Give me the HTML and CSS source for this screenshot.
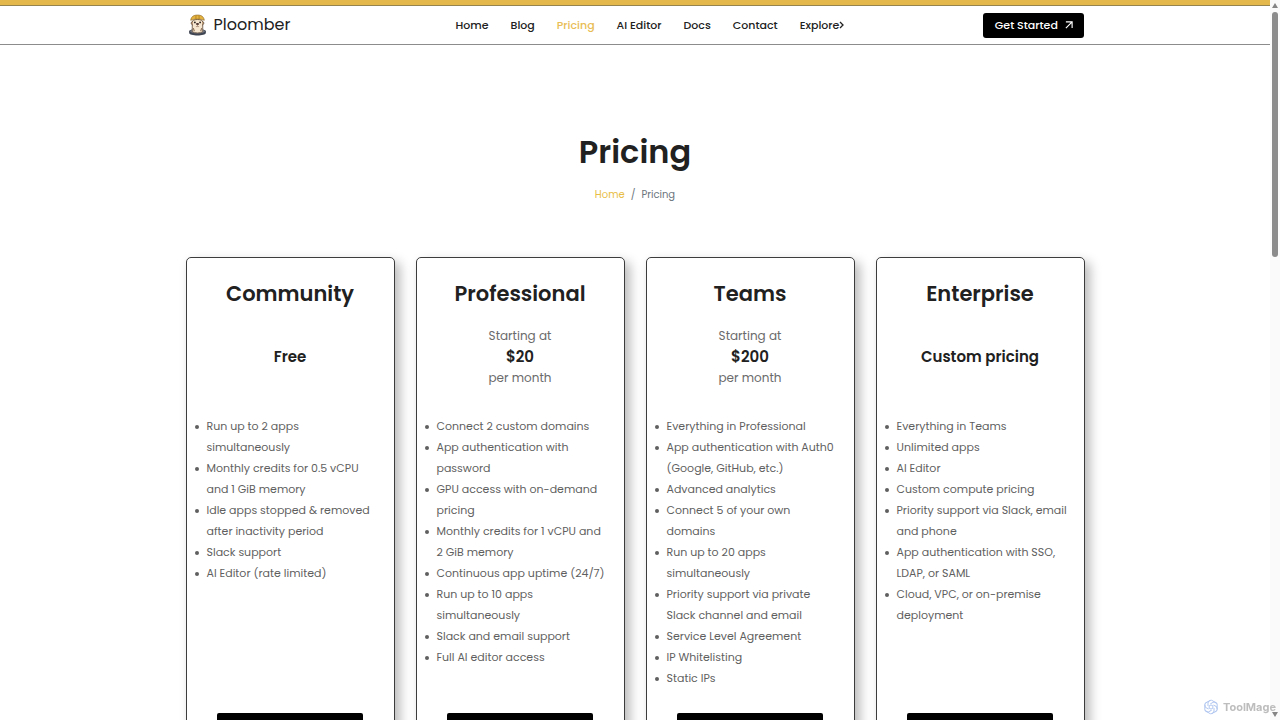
FILE: index.html
```html
<!DOCTYPE html>
<html lang="en">
<head>
<meta charset="UTF-8">
<meta name="viewport" content="width=device-width, initial-scale=1.0">
<title>Pricing | Ploomber</title>
<link rel="stylesheet" href="styles.css">
</head>
<body>

<header class="site-header">
  <div class="container header-inner">
    <a class="brand" href="#">
      <svg class="brand-logo" viewBox="0 0 36 42" aria-hidden="true">
        <path d="M2 33c0-6 32-6 32 0v3c0 7-32 7-32 0z" fill="#3f4552"/>
        <ellipse cx="18" cy="33" rx="14" ry="4" fill="#7b808c"/>
        <path d="M8 34V15c0-6 20-6 20 0v19c-4 3-16 3-20 0z" fill="#f6e6cf" stroke="#5a4636" stroke-width="1.5"/>
        <path d="M9 14c-4 1-4 6 0 7M27 14c4 1 4 6 0 7" fill="#caa27c" stroke="#5a4636" stroke-width="1.5"/>
        <path d="M5 12C6 4 12 2 18 2s12 2 13 10c-7-3-19-3-26 0z" fill="#e5b440" stroke="#8a6524" stroke-width="1.2"/>
        <path d="M15 3v7M21 3v7" stroke="#a87b22" stroke-width="1.5"/>
        <circle cx="13" cy="16" r="1.8" fill="#2b2422"/>
        <circle cx="23" cy="16" r="1.8" fill="#2b2422"/>
        <ellipse cx="18" cy="19" rx="3" ry="2" fill="#4a302c"/>
        <path d="M18 20v3M15 24h6" stroke="#7a5848" stroke-width="1"/>
        <path d="M10 27l2 6M26 27l-2 6" stroke="#8a6a50" stroke-width="2"/>
      </svg>
      <span>Ploomber</span>
    </a>
    <nav class="main-nav">
      <a href="#">Home</a>
      <a href="#">Blog</a>
      <a class="active" href="#">Pricing</a>
      <a href="#">AI Editor</a>
      <a href="#">Docs</a>
      <a href="#">Contact</a>
      <a class="explore" href="#">Explore
        <svg class="chevron" viewBox="0 0 5 8" aria-hidden="true"><path d="M1 1l3 3-3 3"/></svg>
      </a>
    </nav>
    <a class="get-started" href="#">Get Started
      <svg class="arrow" viewBox="0 0 9 9" aria-hidden="true"><path d="M1 8l7-7M1 1h7v7"/></svg>
    </a>
  </div>
</header>

<main class="container">
  <section class="page-title">
    <h1>Pricing</h1>
    <div class="breadcrumb"><a href="#">Home</a><span>/</span><span>Pricing</span></div>
  </section>

  <section class="plans">
    <article class="plan">
      <h2>Community</h2>
      <div class="price"><strong>Free</strong></div>
      <ul>
        <li>Run up to 2 apps<br>simultaneously</li>
        <li>Monthly credits for 0.5 vCPU<br>and 1 GiB memory</li>
        <li>Idle apps stopped &amp; removed<br>after inactivity period</li>
        <li>Slack support</li>
        <li>AI Editor (rate limited)</li>
      </ul>
      <button type="button" class="plan-button" aria-label="Choose Community"></button>
    </article>

    <article class="plan">
      <h2>Professional</h2>
      <div class="price">
        <span>Starting at</span>
        <strong>$20</strong>
        <span>per month</span>
      </div>
      <ul>
        <li>Connect 2 custom domains</li>
        <li>App authentication with<br>password</li>
        <li>GPU access with on-demand<br>pricing</li>
        <li>Monthly credits for 1 vCPU and<br>2 GiB memory</li>
        <li>Continuous app uptime (24/7)</li>
        <li>Run up to 10 apps<br>simultaneously</li>
        <li>Slack and email support</li>
        <li>Full AI editor access</li>
      </ul>
      <button type="button" class="plan-button" aria-label="Choose Professional"></button>
    </article>

    <article class="plan">
      <h2>Teams</h2>
      <div class="price">
        <span>Starting at</span>
        <strong>$200</strong>
        <span>per month</span>
      </div>
      <ul>
        <li>Everything in Professional</li>
        <li>App authentication with Auth0<br>(Google, GitHub, etc.)</li>
        <li>Advanced analytics</li>
        <li>Connect 5 of your own<br>domains</li>
        <li>Run up to 20 apps<br>simultaneously</li>
        <li>Priority support via private<br>Slack channel and email</li>
        <li>Service Level Agreement</li>
        <li>IP Whitelisting</li>
        <li>Static IPs</li>
      </ul>
      <button type="button" class="plan-button" aria-label="Choose Teams"></button>
    </article>

    <article class="plan">
      <h2>Enterprise</h2>
      <div class="price"><strong>Custom pricing</strong></div>
      <ul>
        <li>Everything in Teams</li>
        <li>Unlimited apps</li>
        <li>AI Editor</li>
        <li>Custom compute pricing</li>
        <li>Priority support via Slack, email<br>and phone</li>
        <li>App authentication with SSO,<br>LDAP, or SAML</li>
        <li>Cloud, VPC, or on-premise<br>deployment</li>
      </ul>
      <button type="button" class="plan-button" aria-label="Choose Enterprise"></button>
    </article>
  </section>
</main>

<div class="scrollbar" aria-hidden="true">
  <svg viewBox="0 0 6 5"><path d="M3 0l3 5H0z"/></svg>
  <div class="scroll-track"><div class="scroll-thumb"></div></div>
  <svg viewBox="0 0 6 5"><path d="M0 0h6L3 5z"/></svg>
</div>

<div class="watermark">
  <svg viewBox="0 0 16 16" aria-hidden="true">
    <path id="petal" d="M5 7V4a3 3 0 0 1 5-2l3 2"/>
    <use href="#petal" transform="rotate(60 8 8)"/>
    <use href="#petal" transform="rotate(120 8 8)"/>
    <use href="#petal" transform="rotate(180 8 8)"/>
    <use href="#petal" transform="rotate(240 8 8)"/>
    <use href="#petal" transform="rotate(300 8 8)"/>
    <circle cx="8" cy="8" r="2"/>
  </svg>
  <span>ToolMage</span>
</div>

</body>
</html>
```

FILE: styles.css
```css
* {
  box-sizing: border-box;
}
html {
  scrollbar-width: none;
}
body {
  margin: 0;
  padding-right: 10px;
  font-family: Poppins, Inter, "Noto Sans", sans-serif;
  font-size: 11px;
  color: #212121;
  background: #fff;
}
a {
  color: inherit;
  text-decoration: none;
}
.container {
  max-width: 899px;
  margin: 0 auto;
}

/* header */
.site-header {
  border-top: 5px solid #e4b84a;
  border-bottom: 1px solid #8c8c8c;
}
.site-header::before {
  content: "";
  display: block;
  height: 1px;
  background: #96844e;
}
.header-inner {
  display: grid;
  grid-template-columns: 240px 1fr 240px;
  align-items: center;
  height: 38px;
  padding: 0 2px;
}
.brand {
  display: flex;
  align-items: center;
  gap: 7px;
  font-size: 16px;
  line-height: 22px;
}
.brand-logo {
  width: 19px;
  height: 22px;
}
.main-nav {
  display: flex;
  justify-content: center;
  gap: 22px;
  margin-left: 28px;
  font-weight: 500;
  line-height: 16px;
  white-space: nowrap;
}
.active {
  color: #e9bd55;
}
.explore {
  display: flex;
  align-items: center;
}
.chevron,
.arrow {
  fill: none;
  stroke: currentColor;
  stroke-width: 1.3;
}
.chevron {
  width: 5px;
  height: 8px;
}
.get-started {
  display: flex;
  align-items: center;
  justify-content: center;
  gap: 7px;
  justify-self: end;
  width: 101px;
  height: 25px;
  border-radius: 3px;
  background: #000;
  color: #fff;
  font-weight: 500;
}
.arrow {
  width: 8px;
  height: 8px;
}

/* title */
.page-title {
  padding: 83px 0 54px;
  text-align: center;
}
h1 {
  margin: 0;
  font-size: 32px;
  line-height: 48px;
  font-weight: 600;
}
.breadcrumb {
  display: flex;
  justify-content: center;
  gap: 6px;
  margin-top: 11px;
  font-size: 10px;
  line-height: 16px;
  color: #6c757d;
}
.breadcrumb a {
  color: #e9bd45;
}

/* plans */
.plans {
  display: grid;
  grid-template-columns: repeat(4, 1fr);
  gap: 21px;
  padding-bottom: 60px;
}
.plan {
  display: flex;
  flex-direction: column;
  padding: 20px 0 24px;
  border: 1px solid #3c3c3c;
  border-radius: 5px;
  background: #fff;
  box-shadow: 5px 5px 12px rgba(0, 0, 0, 0.28);
}
h2 {
  margin: 0;
  font-size: 21px;
  line-height: 32px;
  font-weight: 600;
  text-align: center;
}
.price {
  display: flex;
  flex-direction: column;
  justify-content: center;
  height: 64px;
  margin: 14px 0 28px;
  text-align: center;
  font-size: 12px;
  line-height: 21px;
  color: #6b6b6b;
}
.price strong {
  font-size: 15px;
  font-weight: 600;
  color: #212121;
}
.plan ul {
  flex: 1;
  margin: 0 0 24px;
  padding-left: 20px;
  line-height: 21px;
  color: #5f5f5f;
  list-style: none;
  white-space: nowrap;
}
.plan li::before {
  content: "";
  display: inline-block;
  width: 4px;
  height: 4px;
  margin: 0 8px 0 -12px;
  border-radius: 50%;
  background: #5f5f5f;
  vertical-align: middle;
}
.plan-button {
  width: 146px;
  height: 32px;
  margin: 0 auto;
  border: 0;
  border-radius: 2px;
  background: #000;
}

/* overlays */
.scrollbar {
  position: fixed;
  top: 0;
  right: 0;
  bottom: 0;
  display: flex;
  flex-direction: column;
  align-items: center;
  width: 10px;
  padding: 3px 0;
  background: #fafafa;
}
.scrollbar svg {
  width: 6px;
  height: 5px;
  fill: #858585;
}
.scroll-track {
  flex: 1;
  padding-top: 4px;
}
.scroll-thumb {
  width: 6px;
  height: 35%;
  border-radius: 3px;
  background: #8b8b8b;
}
.watermark {
  position: fixed;
  right: 4px;
  bottom: 5px;
  display: flex;
  align-items: center;
  gap: 4px;
  font-family: Inter, sans-serif;
  font-size: 11px;
  font-weight: 700;
  line-height: 16px;
  color: #bdbdbd;
}
.watermark svg {
  width: 16px;
  height: 16px;
  fill: none;
  stroke: #afc5ef;
}
```
